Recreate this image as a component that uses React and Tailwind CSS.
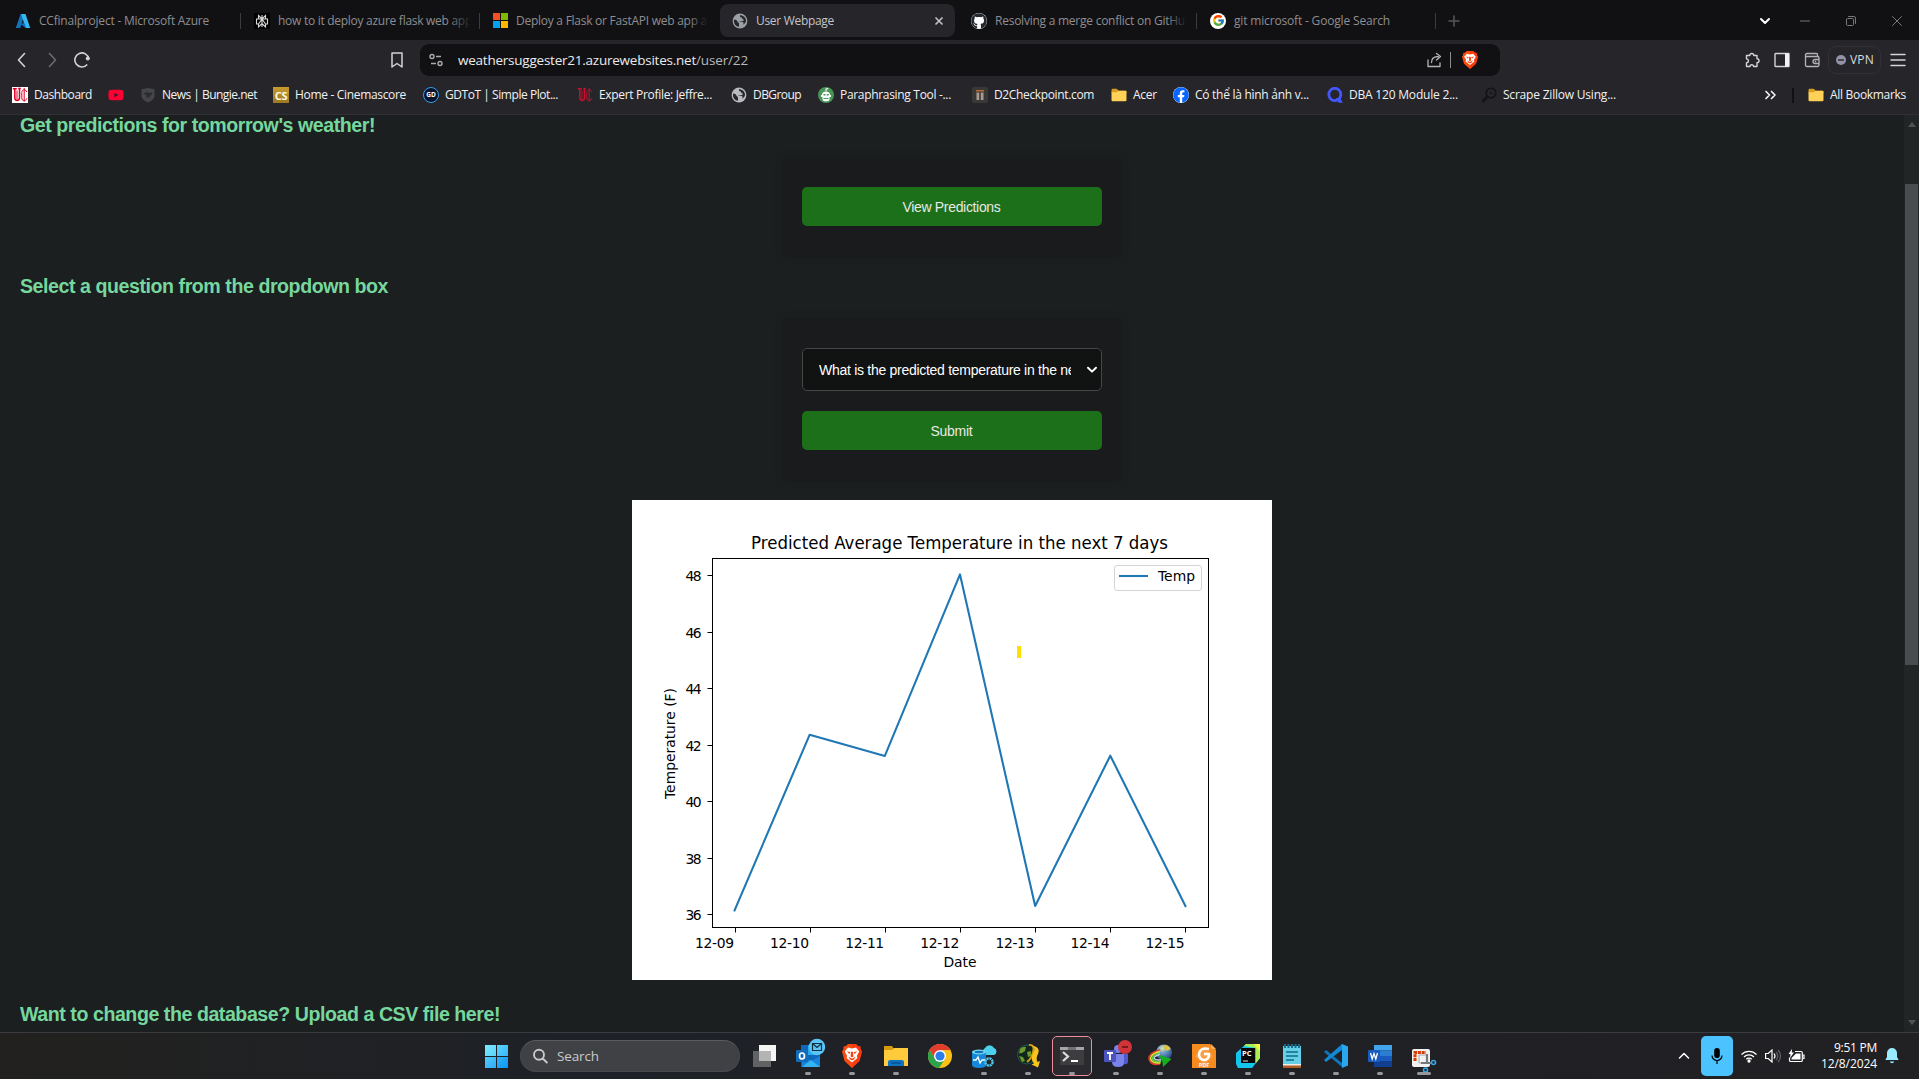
import { useLayoutEffect, useRef, useState } from "react";
import { FaYoutube, FaGithub, FaFacebook } from "react-icons/fa";
import { FcGoogle } from "react-icons/fc";

/* Text whose tracking is adjusted so that it fills the given width. */
function Fit({ w, children, className = "" }) {
  const ref = useRef(null);
  const [ls, setLs] = useState(0);
  useLayoutEffect(() => {
    const natural = ref.current.getBoundingClientRect().width;
    setLs((w - natural) / String(children).length);
  }, [w, children]);
  return (
    <span className="block shrink-0 whitespace-nowrap" style={{ width: w }}>
      <span ref={ref} className={"inline-block whitespace-pre " + className} style={{ letterSpacing: ls }}>
        {children}
      </span>
    </span>
  );
}

/* ---------- small icons ---------- */
const Globe = ({ c = "#9aa0a6" }) => (
  <svg viewBox="0 0 16 16" className="size-4 shrink-0">
    <circle cx="8" cy="8" r="7.4" fill={c} />
    <path d="M2 6.5c2 .2 3 .8 3.4 2 .3 1.2 1.6 1 1.6 2.3v2.9C4 13.5 2 11 2 8zM8 2.2c-.3 1.5.2 2 1.6 2.2 1 .2.4 1.6 1.4 1.8 1.1.2 1 1.3.2 1.7-1.6.6-3.4 0-4.4.6l4 .6c1 .4 1 1.6.3 2.6 2-1 3-2.8 2.9-4.5C13.700 4.700 11 2 8 2.200z" fill="#25252a" />
  </svg>
);
const Azure = () => (
  <svg viewBox="0 0 16 16" className="size-4 shrink-0">
    <path d="M5.600 1h4L5.300 15H.8z" fill="#1473b8" />
    <path d="M7 9.500h6l-1 5z" fill="#0b60a8" />
    <path d="M6.200 1h4.300l4.700 14h-4.600z" fill="#35b8f1" />
    <path d="M4.500 10.500h5.300l1 4.500z" fill="#0e6fc0" />
  </svg>
);
const Knot = () => (
  <svg viewBox="0 0 16 16" className="size-4 shrink-0 bg-black">
    <path d="M8 2v12M4.500 2.500 8 6l3.500-3.500V6h2v5h-2v3L8 10.500 4.500 14v-3h-2V6h2zM4.500 6h7M8 6l-3.500 5M8 6l3.500 5" fill="none" stroke="#d8d8d8" strokeWidth="1.100" />
  </svg>
);
const Microsoft = () => (
  <span className="grid size-[15px] shrink-0 grid-cols-2 gap-px">
    <i className="bg-[#f25022]" /><i className="bg-[#7fba00]" /><i className="bg-[#00a4ef]" /><i className="bg-[#ffb900]" />
  </span>
);
const Google = () => (
  <span className="flex size-4 shrink-0 items-center justify-center rounded-full bg-white"><FcGoogle className="size-[13px]" /></span>
);
const Github = () => (
  <span className="flex size-4 shrink-0 items-center justify-center rounded-full bg-white text-[#24292f]"><FaGithub className="size-4" /></span>
);
const Uc = ({ light }) => (
  <svg viewBox="0 0 16 16" className="size-4 shrink-0">
    {light && <path d="M0 0h16v16H0z" fill="#fff" />}
    <path d="M.8 1.700h4M2.800 2v8.500c0 4 4.700 4 4.700 0V2M6.200 1.500h2.600" fill="none" stroke={light ? "#e00122" : "#c41230"} strokeWidth="1.500" />
    <path d="M14.800 5c-.8-3-5-3-5 .5V11c0 3.500 4.300 3.500 5 .3M12.200 1v13.500M5 3.500v9" fill="none" stroke={light ? "#e00122" : "#c41230"} strokeWidth="1" />
  </svg>
);
const Bungie = () => (
  <svg viewBox="0 0 16 16" className="size-4 shrink-0">
    <path d="M1.500 2.200 8 1l6.500 1.200V9c0 3-4 5.500-6.500 6.500C5.500 14.500 1.500 12 1.500 9z" fill="#45464a" />
    <path d="M3.500 6.500 7 5l3 1 2.500-1-1 3-2 1v3l-2-2-1 1-.5-3z" fill="#2b2c2f" />
  </svg>
);
const Cs = () => (
  <span className="flex size-4 shrink-0 items-center justify-center bg-linear-to-b from-[#c79c2f] to-[#9c7722] font-['Open_Sans',sans-serif] text-[11px] leading-none font-bold tracking-tight text-[#fff8e0]">CS</span>
);
const Gd = () => (
  <span className="flex size-4 shrink-0 items-center justify-center rounded-full border border-[#3c9fe6] bg-[#06122e] font-['Open_Sans',sans-serif] text-[6.500px] font-bold text-white">GD</span>
);
const Robot = () => (
  <svg viewBox="0 0 16 16" className="size-4 shrink-0">
    <circle cx="8" cy="8" r="8" fill="#499557" />
    <path d="M8 4V2q2 0 2-1" stroke="#fff" strokeWidth="1.100" fill="none" />
    <path d="M4 8a4 3.500 0 0 1 8 0v1H4zM3 8h10v2H3zM4.500 10h7v2a3 2 0 0 1-7 0z" fill="#fff" />
    <path d="M5.500 7h2v1.500h-2zM8.700 7h2v1.500h-2zM5.500 11h5v1h-5z" fill="#499557" />
  </svg>
);
const D2 = () => (
  <svg viewBox="0 0 16 16" className="size-4 shrink-0">
    <rect width="16" height="16" rx="2" fill="#3a3737" />
    <path d="M4 3h8v1.500H4z" fill="#bd6c35" />
    <path d="M4.500 5.500h2.700V13H4.500zM8.800 5.500h2.700V13H8.800z" fill="#a99a92" />
    <path d="M7.300 5.500h.7V13h-.7z" fill="#7b4630" />
  </svg>
);
const Folder = () => (
  <svg viewBox="0 0 16 16" className="size-4 shrink-0">
    <path d="M.5 3q0-1.300 1.200-1.300h4L7.500 3.500h6.800q1.200 0 1.200 1.200V6H.5z" fill="#d99e20" />
    <path d="M.5 5.200h5L7.300 4h7q1.200 0 1.200 1.200V13q0 1.200-1.200 1.200H1.700Q.5 14.200.5 13z" fill="#ffd257" />
  </svg>
);
const QIcon = () => (
  <svg viewBox="0 0 16 16" className="size-4 shrink-0">
    <ellipse cx="7.800" cy="7.500" rx="6" ry="6.200" fill="none" stroke="#4257ff" strokeWidth="2.800" />
    <path d="m9 11 2.500 4.800h4.200l-2.500-5z" fill="#4257ff" />
  </svg>
);
const Lens = () => (
  <svg viewBox="0 0 16 16" className="size-4 shrink-0">
    <circle cx="10" cy="6" r="4.600" fill="#2b2b2e" stroke="#141416" strokeWidth="1.800" />
    <path d="m6 10-4.500 5" stroke="#151517" strokeWidth="2.800" />
    <path d="M8 5h4M8 7h4" stroke="#151517" />
  </svg>
);
const Brave = ({ className = "h-[18px] w-4" }) => (
  <svg viewBox="0 0 20 24" preserveAspectRatio="none" className={className}>
    <path d="M6 0h8l2 2 2.500.5L18.500 5 20 7.500 17.500 17 10 24 2.500 17 0 7.500 1.500 5V2.500L4 2z" fill="#fb4a10" />
    <path d="M10 0h4l2 2 2.500.5L18.500 5 20 7.500 17.500 17 10 24z" fill="#f5300f" opacity=".55" />
    <path d="M6 3.500 10 4.500 14 3.500 17.200 7.500 14.800 12 15.500 14 13 16 10 18.500 7 16 4.500 14 5.200 12 2.800 7.500z" fill="#fff" />
    <path d="m4.800 7.300 3.700.9L7.300 10zM15.200 7.300l-3.700.9 1.200 1.800zM9 7.800h2l.4 4.700-1.400.9-1.400-.9zM6.500 12.800l3.500 1.900 3.500-1.900-1.300 2.500L10 16.500l-2.200-1.200z" fill="#f8400f" />
  </svg>
);
const Line = ({ d, className = "", w = 1.3 }) => (
  <svg viewBox="0 0 16 16" className={"size-4 shrink-0 " + className} fill="none" stroke="currentColor" strokeWidth={w} strokeLinecap="round" strokeLinejoin="round"><path d={d} /></svg>
);

/* ---------- browser chrome ---------- */
function Tab({ icon, text, w, className, sep }) {
  return (
    <div className={"flex h-full shrink-0 items-center " + className}>
      {icon}
      <div className="ml-2 flex-1 overflow-hidden"><Fit w={w}>{text}</Fit></div>
      {sep && <span className="h-4 w-px bg-[#3b3b40]" />}
    </div>
  );
}

function TabStrip() {
  return (
    <div className="flex h-10 items-center bg-[#111113] pt-px pl-[15px] text-xs text-[#8e8e92]">
      <Tab icon={<Azure />} text="CCfinalproject - Microsoft Azure" w={170} className="w-[226px]" sep />
      <div className="relative ml-[13px]">
        <Tab icon={<Knot />} text="how to it deploy azure flask web app" w={194} className="w-[226px] pr-[11px]" />
        <span className="absolute top-[-8px] right-[8px] h-8 w-6 bg-linear-to-r from-transparent to-[#111113]" />
        <span className="absolute top-0 right-0 h-4 w-px bg-[#3b3b40]" />
      </div>
      <div className="relative ml-[13px]">
        <Tab icon={<Microsoft />} text="Deploy a Flask or FastAPI web app a" w={191} className="w-[215px]" />
        <span className="absolute top-[-8px] right-0 h-8 w-5 bg-linear-to-r from-transparent to-[#111113]" />
      </div>
      <div className="ml-[12px] flex h-[33px] w-[235px] items-center rounded-lg bg-[#25252a] pr-[10px] pl-3 text-[#c4c4c8]">
        <Globe />
        <div className="ml-2 flex-1"><Fit w={78}>User Webpage</Fit></div>
        <svg viewBox="0 0 12 12" className="size-3" fill="none" stroke="currentColor" strokeWidth="1.600"><path d="m2.500 2.500 7 7M9.500 2.500l-7 7" /></svg>
      </div>
      <div className="relative ml-4">
        <Tab icon={<Github />} text="Resolving a merge conflict on GitHu" w={190} className="w-[226px] pr-[11px]" />
        <span className="absolute top-[-8px] right-[10px] h-8 w-5 bg-linear-to-r from-transparent to-[#111113]" />
        <span className="absolute top-0 right-0 h-4 w-px bg-[#3b3b40]" />
      </div>
      <Tab icon={<Google />} text="git microsoft - Google Search" w={156} className="ml-[13px] w-[226px]" sep />
      <Line d="M8 3v10M3 8h10" className="ml-[10px] text-[#55555a]" w={1.6} />
      <div className="ml-auto flex items-center pr-[14px] text-[#77777c]">
        <Line d="M4 6l4 4 4-4" className="mr-[24px] text-white" w={2} />
        <Line d="M3.500 8h9" className="mr-[30px]" w={1} />
        <Line d="M3.500 6.500q0-1 1-1h5q1 0 1 1v5q0 1-1 1h-5q-1 0-1-1zM5.500 3.500h5.500q1.500 0 1.500 1.500v5.500" className="mr-[30px]" w={1} />
        <Line d="m3.500 3.500 9 9M12.500 3.500l-9 9" w={1} />
      </div>
    </div>
  );
}

function Toolbar() {
  return (
    <div className="flex h-10 items-center pl-[14px] text-[#d3d3d6]">
      <Line d="M10.500 1.500 4.500 8l6 6.500" w={1.6} />
      <Line d="m5.500 1.500 6 6.500-6 6.500" className="ml-[14px] text-[#6c6c71]" w={1.6} />
      <svg viewBox="0 0 16 16" className="ml-[14px] size-4"><path d="M13.200 12.500A7 7 0 1 1 14.800 7" fill="none" stroke="currentColor" strokeWidth="1.600" /><circle cx="13.800" cy="6.600" r="2" fill="currentColor" /></svg>
      <Line d="M3 1h10v14l-5-3.500L3 15z" className="ml-[299px]" w={1.5} />
      <div className="ml-[15px] flex h-8 w-[1080px] items-center rounded-[9px] bg-[#111113] pl-[8px] text-[#d0d0d3]">
        <svg viewBox="0 0 16 16" className="size-4" fill="none" stroke="#aaaaae" strokeWidth="1.400"><circle cx="4" cy="4.500" r="2" /><path d="M8 4.500h5M3 11.500h5" /><circle cx="12" cy="11.500" r="2" /></svg>
        <div className="ml-[14px] flex text-[13.500px]"><Fit w={238} className="text-[#ebebed]">weathersuggester21.azurewebsites.net</Fit><Fit w={52} className="text-[#b9b9bd]">/user/22</Fit></div>
        <div className="ml-auto flex items-center pr-[22px]">
          <Line d="M2 8v6.500h12V11M5.500 10.500c0-4 3-6 7-6M10.500 1.500l4 3-4 3.500" className="text-[#b5b5b9]" w={1.3} />
          <span className="mr-[11px] ml-[8px] h-4 w-px bg-[#8b8b90]" />
          <Brave />
        </div>
      </div>
      <div className="ml-auto flex items-center pr-[13px] text-[#d3d3d6]">
        <Line d="M2.500 3.500h3.300a2 2 0 1 1 4 0H13v3.300a2 2 0 1 1 0 4v3.700H9.600a1.800 1.800 0 0 0-3.600 0H2.500V10.700a1.900 1.900 0 1 0 0-3.800z" w={1.4} />
        <svg viewBox="0 0 16 16" className="ml-[14px] size-4"><rect x="1" y="1.500" width="14" height="13" rx=".5" fill="none" stroke="currentColor" strokeWidth="1.400" /><path d="M11 1.500h4v13h-4z" fill="#f3f3f5" /></svg>
        <Line d="M2 4.500h11.500q1.500 0 1.500 1.500v7q0 1.500-1.500 1.500H3q-1.500 0-1.500-1.500V3q0-1.500 1.500-1.500h9.500q1 0 1 1v1.500M15 7.500h-4a2 2 0 0 0 0 4h4M11.300 9.500h.4" className="ml-[14px] text-[#b4b4b8]" w={1.3} />
        <div className="ml-[8px] flex h-7 w-[53px] items-center rounded-lg border border-[#303036] pl-[7px] text-xs text-[#dcdcdf]">
          <span className="mr-1 flex size-[10px] items-center justify-center rounded-full bg-[#9293a8]"><i className="h-[2px] w-[6px] bg-[#45464f]" /></span>
          <Fit w={24}>VPN</Fit>
        </div>
        <Line d="M1 2.500h14M1 8h14M1 13.500h14" className="ml-[9px]" w={1.5} />
      </div>
    </div>
  );
}

const BOOKMARKS = [
  [<Uc light />, "Dashboard", 58, "w-24"],
  [<FaYoutube className="size-4 text-[#ff0033]" />, "", 0, "w-8"],
  [<Bungie />, "News | Bungie.net", 95, "w-[133px]"],
  [<Cs />, "Home - Cinemascore", 111, "w-[150px]"],
  [<Gd />, "GDToT | Simple Plot...", 113, "w-[154px]"],
  [<Uc />, "Expert Profile: Jeffre...", 113, "w-[154px]"],
  [<Globe c="#b9babf" />, "DBGroup", 48, "w-[87px]"],
  [<Robot />, "Paraphrasing Tool -...", 111, "w-[154px]"],
  [<D2 />, "D2Checkpoint.com", 100, "w-[139px]"],
  [<Folder />, "Acer", 24, "w-[62px]"],
  [<span className="block rounded-full bg-white"><FaFacebook className="size-4 text-[#0866ff]" /></span>, "Có thể là hình ảnh v...", 114, "w-[154px]"],
  [<QIcon />, "DBA 120 Module 2...", 109, "w-[154px]"],
  [<Lens />, "Scrape Zillow Using...", 113, "w-[154px]"],
];

function Bookmarks() {
  return (
    <div className="flex h-[35px] shrink-0 items-center border-b border-[#303035] pb-1 pl-3 text-xs text-[#f2f2f4]">
      {BOOKMARKS.map(([icon, text, w, cls], i) => (
        <div key={i} className={"flex shrink-0 items-center gap-[6px] " + cls}>{icon}{text && <Fit w={w}>{text}</Fit>}</div>
      ))}
      <div className="ml-auto flex items-center pr-[13px]">
        <Line d="m4 4.500 3.500 3.500L4 11.500M9.500 4.500 13 8l-3.500 3.500" w={1.7} />
        <span className="mr-[14px] ml-[14px] h-[15px] w-[2px] bg-[#111113]" />
        <Folder />
        <span className="ml-[6px]"><Fit w={76}>All Bookmarks</Fit></span>
      </div>
    </div>
  );
}

/* ---------- chart ---------- */
const DAYS = ["12-09", "12-10", "12-11", "12-12", "12-13", "12-14", "12-15"];
const TEMP_Y = [410.4, 234.7, 255.9, 74.4, 406, 255.7, 406];
const YTICKS = [[48, 75.5], [46, 132.5], [44, 188.5], [42, 245.5], [40, 301.5], [38, 358.5], [36, 414.5]];

function Chart() {
  const pts = TEMP_Y.map((y, i) => `${102.55 + i * 75.15},${y}`).join(" ");
  return (
    <svg width="640" height="480" className="mx-auto block bg-white font-['DejaVu_Sans',sans-serif] text-[13.890px]">
      <text transform="translate(327.500 49) scale(1 1.080)" textAnchor="middle" className="text-[16.670px]" textLength="417" lengthAdjust="spacingAndGlyphs">Predicted Average Temperature in the next 7 days</text>
      <rect x="80.500" y="58.500" width="496" height="369" fill="none" stroke="#000" />
      {YTICKS.map(([v, y]) => (
        <g key={v}><path d={`M75.500 ${y}h5`} stroke="#000" /><text x="69.500" y={y + 5} textAnchor="end" textLength="16">{v}</text></g>
      ))}
      {DAYS.map((d, i) => (
        <g key={d}><path d={`M${103.5 + i * 75} 427.500v5`} stroke="#000" /><text x={102 + i * 75.1} y="448" textAnchor="end" textLength="39">{d}</text></g>
      ))}
      <text x="328" y="467" textAnchor="middle" textLength="33">Date</text>
      <text transform="translate(43 243.500) rotate(-90)" textAnchor="middle" textLength="111">Temperature (F)</text>
      <polyline points={pts} fill="none" stroke="#1f77b4" strokeWidth="2.080" strokeLinejoin="round" strokeLinecap="square" />
      <rect x="482.500" y="65.500" width="87" height="25" rx="2.500" fill="#fff" stroke="#d5d5d5" />
      <path d="M487 76h29" stroke="#1f77b4" strokeWidth="2.080" />
      <text x="526" y="81" textLength="37">Temp</text>
      <path d="M385 146h4v12h-4z" fill="#ffe100" />
    </svg>
  );
}

/* ---------- web page ---------- */
const Heading = ({ w, children, className = "" }) => (
  <h3 className={"pl-5 text-[19.600px] leading-[22px] font-bold text-[#76d79e] " + className}><Fit w={w}>{children}</Fit></h3>
);
const GreenButton = ({ w, children }) => (
  <button className="flex h-[39px] w-[300px] items-center justify-center rounded-[5px] bg-[#1c701a] pr-px text-sm text-[#e8e8e5]"><Fit w={w}>{children}</Fit></button>
);

function Page() {
  return (
    <div className="flex h-[917px] shrink-0 bg-[#1c1f20] font-['Liberation_Sans',Arial,sans-serif]">
      <main className="flex w-[1904px] flex-col overflow-hidden">
        <Heading w={355} className="-mt-px">Get predictions for tomorrow's weather!</Heading>
        <div className="mx-auto mt-[21px] flex h-[100px] w-[340px] justify-center rounded-lg bg-[#1a1b1d] pt-[30px] shadow-[0_0_10px_rgba(0,0,0,0.1)]">
          <GreenButton w={98}>View Predictions</GreenButton>
        </div>
        <Heading w={368} className="mt-[18px]">Select a question from the dropdown box</Heading>
        <div className="mx-auto mt-[21px] flex h-[163px] w-[340px] flex-col items-center rounded-lg bg-[#1a1b1d] pt-[30px] shadow-[0_0_10px_rgba(0,0,0,0.1)]">
          <div className="mb-5 flex h-[43px] w-[300px] items-center justify-between rounded-[5px] border border-[#43474a] bg-[#111212] pr-px pl-4 text-sm text-white">
            <div className="w-[252px] overflow-hidden"><Fit w={263}>What is the predicted temperature in the nex</Fit></div>
            <Line d="M4 5.800l4 3.800 4-3.800" w={2} />
          </div>
          <GreenButton w={42}>Submit</GreenButton>
        </div>
        <div className="mt-[19px] shrink-0"><Chart /></div>
        <Heading w={480} className="mt-[23px]">Want to change the database? Upload a CSV file here!</Heading>
      </main>
      <div className="flex w-[15px] flex-col items-center bg-[#222526] text-[#505355]">
        <svg viewBox="0 0 8 5" className="mt-[7px] h-[5px] w-2 shrink-0"><path d="M0 5 4 0l4 5z" fill="currentColor" /></svg>
        <div className="mt-[57px] h-[481px] w-[13px] shrink-0 bg-[#484c4e]" />
        <svg viewBox="0 0 8 5" className="mt-auto mb-[7px] h-[5px] w-2 shrink-0"><path d="m0 0 4 5 4-5z" fill="currentColor" /></svg>
      </div>
    </div>
  );
}

/* ---------- taskbar ---------- */
const Art = ({ children }) => <svg viewBox="0 0 24 24" className="size-6 overflow-visible">{children}</svg>;

const APPS = [
  { art: <Art><path d="M7 1h17v16H7z" fill="#f5f5f5" /><path d="M1 7h18v16H1z" fill="#77787a" opacity=".75" /><path d="M7 7h12v10H7z" fill="#b4b4b4" /></Art> },
  { run: 1, art: <Art><path d="M5 1h14l5 9v13H5z" fill="#1066b8" /><path d="M12 1h9v10h-9z" fill="#28a8ea" /><path d="m6 12 9 5 9-5v11H6z" fill="#1684dc" /><path d="m6 23 9-7 9 7z" fill="#36b2f0" /><rect y="6" width="12" height="12" rx="1" fill="#0f6cbd" /><ellipse cx="6" cy="12" rx="2.500" ry="3" fill="none" stroke="#fff" strokeWidth="1.700" /><circle cx="21" cy="3" r="8.200" fill="#5cc5f7" /><path d="M16.500-.5h9v7h-9zl4.500 4 4.500-4" fill="none" stroke="#10303f" strokeWidth="1.200" /></Art> },
  { run: 1, art: <Brave className="h-6 w-5" /> },
  { run: 1, art: <Art><path d="M0 2h8l2 3h14v5H0z" fill="#d69a0c" /><path d="M0 6h8l2-2h14v18H0z" fill="#ffcb3d" /><path d="M4 22v-4q0-2 2-2h12q2 0 2 2v4z" fill="#0f73c5" /><path d="M7 19h10" stroke="#0a4f91" strokeWidth="1.500" /></Art> },
  { art: <Art><circle cx="12" cy="12" r="12" fill="#fbc116" /><path d="M1.600 6A12 12 0 0 1 22.400 6H12L7 15z" fill="#e33b2e" /><path d="M1.600 6A12 12 0 0 0 11 24l6-9H7z" fill="#2ba24c" /><circle cx="12" cy="12" r="6" fill="#fff" /><circle cx="12" cy="12" r="4.600" fill="#2b7de9" /></Art> },
  { run: 1, art: <Art><path d="M13 11a4 4 0 0 1 0-7 5 5 0 0 1 9 0 3.700 3.700 0 0 1 0 7z" fill="#4bd0ee" /><path d="M0 8v13q0 3 7 3t7-3V8z" fill="#1687d9" /><ellipse cx="7" cy="8" rx="7" ry="2.500" fill="#72d5ef" /><ellipse cx="7" cy="8" rx="4.500" ry="1.200" fill="#1273b8" /><path d="M1 16h3l2-3 2 6 2-3h3" stroke="#fff" fill="none" strokeWidth="1.300" /><circle cx="17" cy="18" r="3.600" fill="#1b2830" stroke="#50c9f0" strokeWidth="2.300" strokeDasharray="2.200 .6" /></Art> },
  { run: 1, art: <Art><circle cx="11" cy="10.500" r="10" fill="#10261f" /><circle cx="11" cy="10.500" r="9.500" fill="none" stroke="#245a4e" /><path d="M4 5q3-3 6-2l-1 4-3 2-3 .500zM3 12l4 1 2 4-3 1zM11 8l4-1v5l-3 1z" fill="#6d9a2a" /><path d="M13 1q6-1 4 7-1 6-6 10" stroke="#d99b0b" strokeWidth="1.800" fill="none" /><path d="M14 1.500q7 1 3 8-3 6 1 10l-2.500 1 6.500 3 2-6.500-2.500 1q-2-4 .5-8 3-8-8-8.500z" fill="#f7c51e" /></Art> },
  { run: 1, active: true, art: <Art><path d="M0 3h24v18H0z" fill="#3d3d40" /><path d="M0 3h24v3H0z" fill="#a4a5a7" /><path d="M8 3h8v3H8z" fill="#707174" /><path d="m3 8 5 4.500L3 17" fill="none" stroke="#ddd" strokeWidth="2.200" /><path d="M11 17h7" stroke="#fff" strokeWidth="2" /></Art> },
  { run: 1, art: <Art><circle cx="14" cy="5" r="4" fill="#7b83eb" /><circle cx="21" cy="7" r="3" fill="#5059c9" /><path d="M8 10h12v9q0 4-6 4t-6-5z" fill="#7b83eb" /><path d="M20 10h4v7q0 4-4 3z" fill="#5059c9" /><rect y="6" width="12" height="12" rx="1" fill="#4b53bc" /><path d="M3 9h6M6 9v7" stroke="#fff" strokeWidth="1.800" /><circle cx="21" cy="3" r="7" fill="#d13438" /><path d="M18 3h6" stroke="#551315" strokeWidth="1.500" /></Art> },
  { run: 1, art: <Art><defs><radialGradient id="ball" cx=".4" cy=".25" r=".8"><stop offset="0" stopColor="#e9e6a0" /><stop offset=".35" stopColor="#6f9dcb" /><stop offset="1" stopColor="#1e3f77" /></radialGradient></defs><circle cx="16" cy="8.500" r="8" fill="url(#ball)" /><path d="M16 1q5 0 6.500 4l-3 2-3-2z" fill="#dfc53c" /><path d="M12 6Q0 9 1 15q2 7 11 5" fill="none" stroke="#e23d2a" strokeWidth="1.600" /><path d="M12 7.500Q2 10 2.600 15q2 5 10 3.600" fill="none" stroke="#f6e233" strokeWidth="1.600" /><path d="M12 9Q4 11 4.200 15q2 3.600 9 2.200" fill="none" stroke="#5fcf45" strokeWidth="1.600" /><path d="M12 10.500Q6 12 6 14.500q2 2.200 7 1.200" fill="none" stroke="#c9cde0" strokeWidth="1.500" /><path d="m11 11 12.500 4L15 23l-.5-5z" fill="#16b01f" /></Art> },
  { run: 1, art: <Art><path d="M0 0h18l6 6v18H0z" fill="#f68b1f" /><path d="M19 0v5h5z" fill="#ffad55" /><path d="m12 3 9 9-9 9-9-9z" fill="#f9a04a" /><path d="M17 5q-9-2-10 5 0 6 6 6 4-1 4-6h-5" stroke="#fff" strokeWidth="2.500" fill="none" /><text x="12" y="22.500" textAnchor="middle" fill="#fff" className="font-['Open_Sans',sans-serif] text-[5.500px] font-bold">PDF</text></Art> },
  { run: 1, art: <Art><path d="M0 9 10 0h14v14l-8 10H2l-2-4z" fill="#14c5ee" /><path d="M8 2l2-2h14v14l-4 5V4z" fill="#a8ee56" /><path d="M18 0h6v8z" fill="#f7f542" /><path d="M5 4h14v15H5z" fill="#080808" /><text x="6" y="12" fill="#fff" className="font-['Open_Sans',sans-serif] text-[7.500px] font-bold">PC</text><path d="M7 17h5" stroke="#ddd" strokeWidth="1" /></Art> },
  { run: 1, art: <Art><path d="M3 2h18v19H3z" fill="#65d0e8" /><path d="M3 21h18v3H3z" fill="#ad5b27" /><path d="M3 20h18v1.500H3z" fill="#f4eee4" /><path d="M5 0v4M8.500 0v4M12 0v4M15.500 0v4M19 0v4" stroke="#176d8d" strokeWidth="2" /><path d="M6 8h12M6 12h12M6 16h8" stroke="#126887" strokeWidth="1.700" /></Art> },
  { run: 1, art: <Art><path d="m0 8 2-2 16 13v4z" fill="#1173b8" /><path d="m0 16 18-16v6L2 18z" fill="#1388d3" /><path d="m18 0 6 2.500v19L18 24z" fill="#29a8f0" /></Art> },
  { run: 1, art: <Art><path d="M6 1h18v5.500H6z" fill="#41a5ee" /><path d="M6 6.500h18V12H6z" fill="#2b7cd3" /><path d="M6 12h18v5.500H6z" fill="#185abd" /><path d="M6 17.500h18V23H6z" fill="#103f91" /><rect y="6" width="12" height="12" rx="1" fill="#185abd" /><path d="m2.500 9 1.700 6L6 9.500 7.800 15l1.700-6" stroke="#fff" strokeWidth="1.300" fill="none" /></Art> },
  { run: 2, art: <Art><rect y="5" width="18" height="18" rx="2" fill="#f1f1f1" /><path d="M3 17V8.500h11" fill="none" stroke="#d83b01" strokeWidth="3" strokeDasharray="3 .8" /><path d="M7 11h8v8M7 11v8h8" fill="none" stroke="#aaa" strokeWidth="1" /><path d="M15 10v10M9 19h11" stroke="#777a7d" strokeWidth="2.200" /><circle cx="21.500" cy="18.500" r="2" fill="none" stroke="#32a9e5" strokeWidth="1.600" /><circle cx="13.500" cy="26" r="2" fill="none" stroke="#32a9e5" strokeWidth="1.600" /></Art> },
];

function Taskbar() {
  return (
    <div className="flex h-[47px] shrink-0 items-center border-t border-[#3a3c3f] bg-linear-to-r from-[#22211f] via-[#1e2127] via-30% to-[#212023] pl-[485px] font-['Open_Sans',sans-serif]">
      <div className="grid size-[23px] grid-cols-2 gap-px">
        <i className="bg-linear-to-br from-[#7be9ff] to-[#58d2fb]" /><i className="bg-linear-to-br from-[#5ad5fd] to-[#38b5fa]" /><i className="bg-linear-to-br from-[#52cbfb] to-[#2dadf9]" /><i className="bg-linear-to-br from-[#30b2fa] to-[#0796f8]" />
      </div>
      <div className="ml-3 flex h-8 w-[220px] items-center rounded-full border border-t-[#5a5b5f] border-r-[#48494d] border-b-[#48494d] border-l-[#48494d] bg-[#404145] pl-[11px] text-[13.500px] text-[#c9c9cb]">
        <Line d="M12 6.800a5 5 0 1 1-10 0 5 5 0 0 1 10 0M10.800 10.500l4 4" w={1.9} />
        <span className="ml-[9px]"><Fit w={42}>Search</Fit></span>
      </div>
      <div className="ml-[2px] flex">
        {APPS.map((a, i) => (
          <div key={i} className={"relative mx-[2px] flex size-10 items-center justify-center rounded-[5px] " + (a.active ? "border border-[#f08d9b] bg-[#2a2a2f]" : "border border-transparent")}>
            {a.art}
            {a.run && <span className={"absolute bottom-0 h-[3px] rounded-full bg-[#97989a] " + (a.run === 2 ? "w-[14px]" : "w-[6px]")} />}
          </div>
        ))}
      </div>
      <div className="ml-auto flex items-center text-white">
        <Line d="M3.500 10 8 5.500l4.500 4.500" w={1.5} />
        <div className="ml-[9px] flex h-10 w-8 items-center justify-center rounded-[5px] bg-[#4cc2ff] text-black">
          <svg viewBox="0 0 16 16" className="size-4"><rect x="5.200" y="0" width="5.600" height="10" rx="2.800" fill="#000" /><path d="M3 7.500a5 5 0 0 0 10 0M8 12.500V16" fill="none" stroke="#000" strokeWidth="1.200" /></svg>
        </div>
        <svg viewBox="0 0 16 14" className="ml-2 h-[14px] w-4" fill="none" stroke="#fff" strokeWidth="1.300"><path d="M.5 5.500a10.500 10.500 0 0 1 15 0M3 8a7 7 0 0 1 10 0M5.300 10.300a3.800 3.800 0 0 1 5.400 0" /><circle cx="8" cy="12" r="1" fill="#fff" /></svg>
        <svg viewBox="0 0 16 14" className="ml-2 h-[14px] w-4" fill="none" stroke="#fff" strokeWidth="1.200"><path d="M.6 4.500h2.700L7 1v12L3.300 9.500H.6z" /><path d="M9 4.500q2 2.500 0 5" /><path d="M11 2.800q3.500 4.200 0 8.400M13 1q5 6 0 12" stroke="#606166" /></svg>
        <svg viewBox="0 0 17 14" className="ml-[7px] h-[14px] w-[17px]" fill="none" stroke="#fff" strokeWidth="1.200"><path d="M7 2.500h6q1.300 0 1.300 1.300v7.400q0 1.300-1.300 1.300H2.800Q1.500 12.500 1.500 11.200V8.500M15 6h1v3.500h-1" /><path d="M8 4.500h4.500v6H3.500V9z" fill="#fff" stroke="none" /><path d="M4 0 .5 5h2L2 9l4-5.500H3.800z" fill="#fff" stroke="none" /></svg>
        <div className="ml-4 flex w-[56px] flex-col items-end text-xs leading-4"><Fit w={43}>9:51 PM</Fit><Fit w={56}>12/8/2024</Fit></div>
        <svg viewBox="0 0 14 16" className="mr-5 ml-2 h-4 w-[14px]" fill="#99ebff"><path d="M7 0a5 5 0 0 1 5 5v4l1.700 3H.3L2 9V5a5 5 0 0 1 5-5zM4.800 13.500h4.400a2.300 2.300 0 0 1-4.400 0z" /></svg>
      </div>
    </div>
  );
}

export default function App() {
  return (
    <div className="flex h-[1079px] w-[1919px] flex-col overflow-hidden bg-[#25252a] font-['Open_Sans','Noto_Sans',sans-serif]">
      <TabStrip />
      <Toolbar />
      <Bookmarks />
      <Page />
      <Taskbar />
    </div>
  );
}
